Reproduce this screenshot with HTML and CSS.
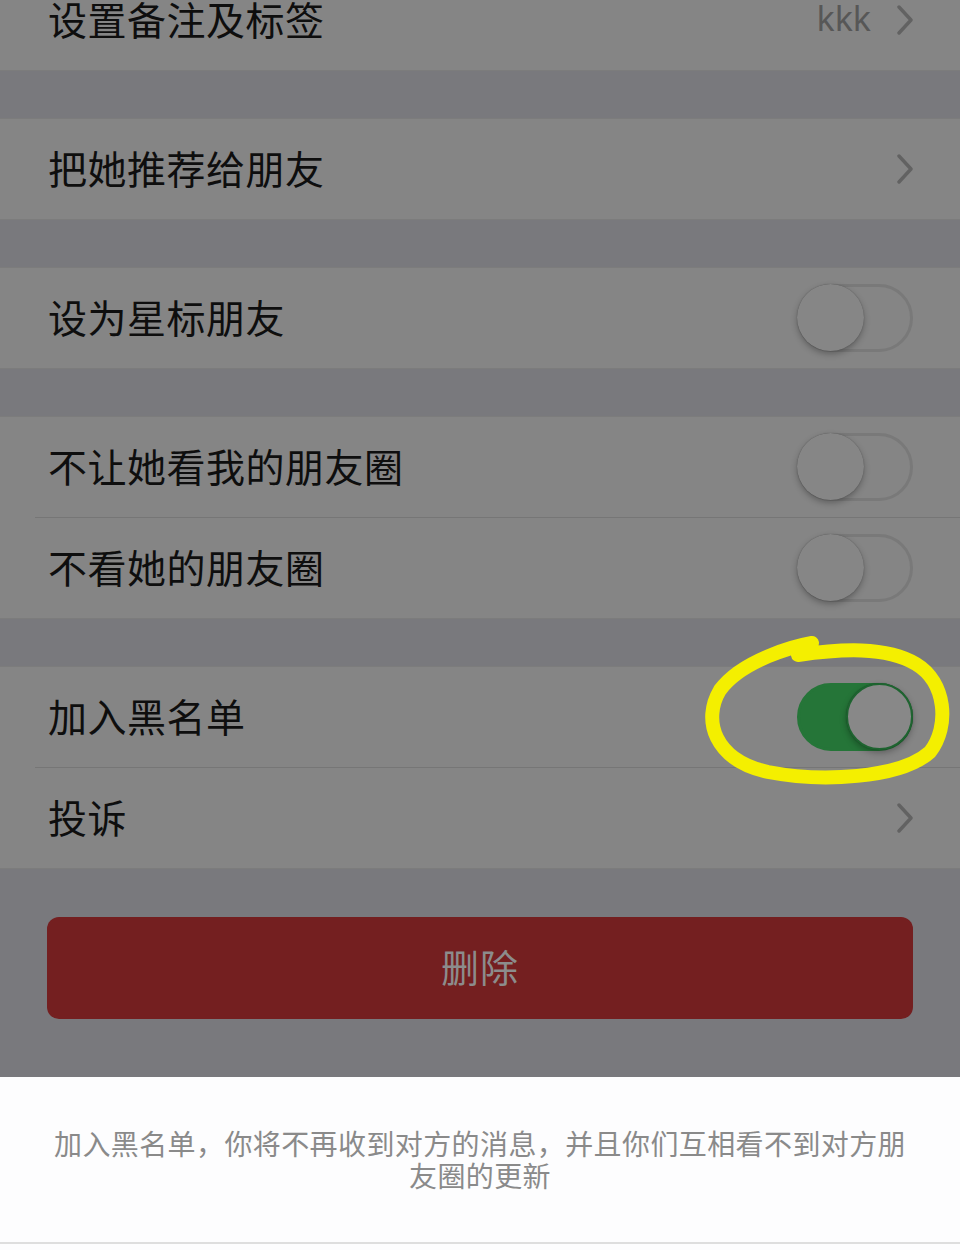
FILE: index.html
```html
<!DOCTYPE html>
<html lang="zh-CN">
<head>
<meta charset="utf-8">
<title>资料设置</title>
<link rel="stylesheet" href="styles.css">
</head>
<body>
<div class="page">
  <div class="dimmed">
    <div class="group first">
      <div class="row">
        <span class="label">设置备注及标签</span>
        <span class="value">kkk</span>
        <svg class="chev" width="16" height="30" viewBox="0 0 16 30"><path d="M2 2 L14 15 L2 28" fill="none" stroke="#626262" stroke-width="3.4" stroke-linecap="round" stroke-linejoin="round"/></svg>
      </div>
    </div>
    <div class="group">
      <div class="row">
        <span class="label">把她推荐给朋友</span>
        <svg class="chev" width="16" height="30" viewBox="0 0 16 30"><path d="M2 2 L14 15 L2 28" fill="none" stroke="#626262" stroke-width="3.4" stroke-linecap="round" stroke-linejoin="round"/></svg>
      </div>
    </div>
    <div class="group">
      <div class="row">
        <span class="label">设为星标朋友</span>
        <span class="switch"><span class="knob"></span></span>
      </div>
    </div>
    <div class="group">
      <div class="row">
        <span class="label">不让她看我的朋友圈</span>
        <span class="switch"><span class="knob"></span></span>
      </div>
      <div class="sep"></div>
      <div class="row">
        <span class="label">不看她的朋友圈</span>
        <span class="switch"><span class="knob"></span></span>
      </div>
    </div>
    <div class="group">
      <div class="row">
        <span class="label">加入黑名单</span>
        <span class="switch on"><span class="knob"></span></span>
      </div>
      <div class="sep"></div>
      <div class="row">
        <span class="label">投诉</span>
        <svg class="chev" width="16" height="30" viewBox="0 0 16 30"><path d="M2 2 L14 15 L2 28" fill="none" stroke="#626262" stroke-width="3.4" stroke-linecap="round" stroke-linejoin="round"/></svg>
      </div>
    </div>
    <div class="btn-wrap">
      <div class="btn-delete">删除</div>
    </div>
  </div>
  <div class="sheet">
    <p class="sheet-text">加入黑名单，你将不再收到对方的消息，并且你们互相看不到对方朋友圈的更新</p>
  </div>
  <svg class="marker" width="960" height="1250" viewBox="0 0 960 1250">
    <path d="M812 643 C 795 646, 742 660, 720 690 C 702 720, 714 760, 768 772 C 820 782, 900 779, 930 752 C 950 726, 946 682, 916 664 C 886 646, 840 649, 798 655" fill="none" stroke="#f4ef00" stroke-width="14" stroke-linecap="round" stroke-linejoin="round"/>
  </svg>
</div>
</body>
</html>
```

FILE: styles.css
```css
* { box-sizing: border-box; }
html, body {
  margin: 0;
  padding: 0;
  background: #fdfdfe;
}
body {
  font-family: "Noto Sans CJK SC", "Noto Sans", sans-serif;
  width: 960px;
  height: 1250px;
  overflow: hidden;
}
.page {
  position: relative;
  width: 960px;
  height: 1250px;
  overflow: hidden;
  display: flex;
  flex-direction: column;
}
.dimmed {
  background: #79797d;
  height: 1077px;
  flex: none;
  display: flex;
  flex-direction: column;
}
.group {
  background: #858585;
  border-top: 1px solid #7c7c7c;
  border-bottom: 1px solid #7c7c7c;
  margin-bottom: 47px;
}
.group.first {
  margin-top: -30px;
  border-top: none;
}
.row {
  height: 100px;
  display: flex;
  align-items: center;
  padding: 0 48px 0 48px;
}
.label {
  flex: 1;
  font-size: 39px;
  color: #0e0e0e;
  letter-spacing: 0.5px;
  padding-bottom: 4px;
}
.value {
  font-size: 34px;
  color: #575757;
  margin-right: 26px;
  padding-bottom: 4px;
  font-family: "Noto Sans", sans-serif;
}
.sep {
  height: 1px;
  background: #767676;
  margin-left: 35px;
}
.chev {
  display: block;
  margin-right: -1px;
}
.switch {
  position: relative;
  width: 116px;
  height: 68px;
  border-radius: 34px;
  border: 3px solid #797979;
  background: #858585;
  margin-right: -1px;
}
.knob {
  position: absolute;
  top: -3px;
  left: -3px;
  width: 67px;
  height: 67px;
  border-radius: 50%;
  background: #868686;
  box-shadow: 0 3px 6px rgba(0,0,0,0.28), 0 0 1px rgba(0,0,0,0.35);
}
.switch.on {
  background: #257538;
  border-color: #257538;
}
.switch.on .knob {
  left: auto;
  right: -3px;
  border: 2px solid #1e6430;
  background: #888888;
}
.btn-wrap {
  padding: 0 47px;
  margin-top: 1px;
}
.btn-delete {
  height: 102px;
  border-radius: 12px;
  background: #741f20;
  color: #8c8c8c;
  font-size: 38px;
  display: flex;
  align-items: center;
  justify-content: center;
  letter-spacing: 1px;
  padding-bottom: 5px;
}
.sheet {
  flex: none;
  height: 167px;
  background: #fdfdfe;
  border-bottom: 2px solid #dedede;
  padding: 50px 50px 0;
}
.sheet-text {
  margin: 0;
  text-align: center;
  font-size: 28px;
  line-height: 32px;
  color: #8a8a8a;
  letter-spacing: 0.4px;
}
.marker {
  position: absolute;
  left: 0;
  top: 0;
  pointer-events: none;
}
```
